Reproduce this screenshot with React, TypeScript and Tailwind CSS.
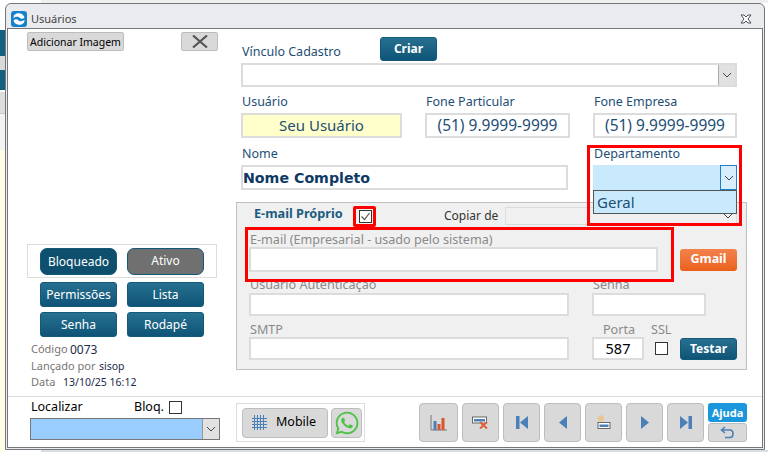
import React from 'react';
import { FaWhatsapp } from 'react-icons/fa';

const Chevron = () => (
    <svg width="10" height="6" viewBox="0 0 10 6" fill="none" stroke="#444" strokeWidth="1">
        <path d="M1 1 L5 5 L9 1" />
    </svg>
);

const Label = ({ className, children }: { className: string; children: React.ReactNode }) => (
    <div className={`text-[12.5px] leading-[16px] text-[#1d4e74] ${className}`}>{children}</div>
);

const MutedLabel = ({ className, children }: { className: string; children: React.ReactNode }) => (
    <div className={`text-[12.6px] leading-[14px] text-[#8a8a8a] ${className}`}>{children}</div>
);

const TealButton = ({ className, children }: { className: string; children: React.ReactNode }) => (
    <button className={`flex items-center justify-center rounded-[3px] border border-[#14587a] bg-gradient-to-b from-[#27708f] to-[#0d5478] text-[12px] text-white ${className}`}>
        {children}
    </button>
);

const NavButton = ({ className, children }: { className: string; children: React.ReactNode }) => (
    <button className={`flex h-[39px] items-center justify-center rounded-[4px] border border-[#bdbdbd] bg-[#d9d9d9] ${className}`}>
        {children}
    </button>
);

const Field = ({ className, children }: { className: string; children?: React.ReactNode }) => (
    <div className={`flex items-center border-2 border-[#dcdcdc] bg-white ${className}`}>{children}</div>
);

const Box = ({ className }: { className: string }) => (
    <div className={`border border-[#333] bg-white ${className}`} />
);

export default function App() {
    return (
        <div className="relative h-[452px] w-[768px] overflow-hidden bg-white font-['Noto_Sans',sans-serif]">
            {/* what shows of the application behind the dialog */}
            <div className="absolute left-[41px] top-0 h-[3px] w-[727px] bg-[#eeeeee]" />
            <div className="absolute left-0 top-[30px] h-[60px] w-[5px] bg-[#12617f]" />
            <div className="absolute left-0 top-[56px] h-[14px] w-[5px] bg-[#d9d9d9]" />
            <div className="absolute left-0 top-[92px] h-[21px] w-[5px] bg-[#dddddd]" />
            <div className="absolute left-0 top-[113px] h-[37px] w-[5px] border-t border-[#cccccc] bg-[#f2f2f2]" />
            <div className="absolute left-0 top-[150px] h-[302px] w-[5px] bg-[#fffde8]" />
            <div className="absolute bottom-0 left-[41px] h-[2px] w-[727px] bg-[#d8dde4]" />

            <div className="absolute left-[5px] top-[3px] flex h-[447px] w-[760px] flex-col rounded-t-[6px] border border-[#73777b] bg-[#e9ebee] px-px pb-px">
                <div className="flex h-[24px] shrink-0 items-center pl-[4px] pr-[11px] pt-[6px]">
                    <svg width="16" height="16" viewBox="0 0 16 16">
                        <rect width="16" height="16" rx="3" fill="#1583c9" />
                        <path d="M13.5 6.5 C12.5 2.5 8.5 1.5 5.5 2.5 C3 3.5 2 5.5 2.8 7.2 C4.5 5.2 7.5 5.4 9 7 C10 8.2 12 8 13.5 6.5 Z" fill="#fff" />
                        <path d="M2.5 9.5 C3.5 13.5 7.5 14.5 10.5 13.5 C13 12.5 14 10.5 13.2 8.8 C11.5 10.8 8.5 10.6 7 9 C6 7.8 4 8 2.5 9.5 Z" fill="#fff" />
                    </svg>
                    <span className="ml-[4px] text-[11px] text-[#444]">Usuários</span>
                    <svg className="ml-auto" width="12" height="10" viewBox="0 0 12 10" fill="#fff" stroke="#4a4f55" strokeWidth="1">
                        <path d="M1 1 H4 L6 3 L8 1 H11 L8 5 L11 9 H8 L6 7 L4 9 H1 L4 5 Z" />
                    </svg>
                </div>

                <div className="flex min-h-0 flex-1 flex-col border border-[#73777b] bg-white">
                    <div className="flex h-[367px] shrink-0">
                        {/* left column */}
                        <div className="flex w-[228px] shrink-0 flex-col pl-[19px]">
                            <div className="mt-[3px] flex justify-between pr-[18px]">
                                <button className="h-[19px] w-[97px] rounded-[2px] border border-[#bdbdbd] bg-[#d9d9d9] text-[10.5px] leading-[16px] text-black">
                                    Adicionar Imagem
                                </button>
                                <button className="flex h-[19px] w-[37px] items-center justify-center rounded-[2px] border border-[#bdbdbd] bg-[#d9d9d9]">
                                    <svg width="16" height="13" viewBox="0 0 16 13" stroke="#555" strokeWidth="2.2" fill="none">
                                        <path d="M1 0.5 L15 12.5 M15 0.5 L1 12.5" />
                                    </svg>
                                </button>
                            </div>

                            <div className="ml-0 mt-[193px] flex h-[34px] w-[190px] items-center gap-[10px] border border-[#dddddd] pl-[12px]">
                                <div className="flex h-[27px] w-[77px] items-center justify-center rounded-[7px] border border-[#14587a] bg-[#0d4f6d] pt-[2px] text-[12px] text-white">Bloqueado</div>
                                <div className="flex h-[27px] w-[77px] items-center justify-center rounded-[7px] border border-[#14587a] bg-[#707070] text-[12px] text-white">Ativo</div>
                            </div>
                            <div className="ml-[13px] mt-[4px] grid w-[164px] grid-cols-2 gap-x-[10px] gap-y-[5px]">
                                <TealButton className="h-[25px] w-[77px]">Permissões</TealButton>
                                <TealButton className="h-[25px] w-[77px]">Lista</TealButton>
                                <TealButton className="h-[25px] w-[77px]">Senha</TealButton>
                                <TealButton className="h-[25px] w-[77px]">Rodapé</TealButton>
                            </div>
                            <div className="ml-[4px] mt-[4px] flex h-[17px] items-center">
                                <span className="w-[39px] text-[11px] text-[#7c7474]">Código</span>
                                <span className="text-[12px] text-[#1b2a4a]">0073</span>
                            </div>
                            <div className="ml-[4px] flex h-[17px] items-center">
                                <span className="w-[68px] text-[11px] text-[#7c7474]">Lançado por</span>
                                <span className="text-[10.5px] text-[#1b2a4a]">sisop</span>
                            </div>
                            <div className="ml-[4px] flex h-[15px] items-center">
                                <span className="w-[32px] text-[11px] text-[#7c7474]">Data</span>
                                <span className="text-[10.5px] text-[#1b2a4a]">13/10/25 16:12</span>
                            </div>
                        </div>

                        {/* right column */}
                        <div className="flex flex-1 flex-col">
                            <div className="ml-[5px] w-[496px]">
                                <div className="mt-[8px] flex h-[26px] items-end pl-[1px]">
                                    <Label className="mb-[3px] w-[138px]">Vínculo Cadastro</Label>
                                    <TealButton className="mb-[2px] h-[24px] w-[57px] font-bold">Criar</TealButton>
                                </div>
                                <Field className="h-[24px] justify-end">
                                    <div className="flex h-full w-[17px] items-center justify-center border-l border-[#aaa] bg-[#e1e1e1]">
                                        <Chevron />
                                    </div>
                                </Field>
                                <div className="mt-[7px] flex pl-[1px]">
                                    <Label className="w-[184px]">Usuário</Label>
                                    <Label className="w-[168px]">Fone Particular</Label>
                                    <Label>Fone Empresa</Label>
                                </div>
                                <div className="mt-[3px] flex">
                                    <Field className="h-[25px] w-[161px] justify-center !bg-[#ffffcc] text-[15px] text-[#1d4e74]">Seu Usuário</Field>
                                    <Field className="ml-[23px] h-[25px] w-[145px] justify-center text-[15.5px] text-[#1d4e74]">(51) 9.9999-9999</Field>
                                    <Field className="ml-[23px] h-[25px] w-[144px] justify-center text-[15.5px] text-[#1d4e74]">(51) 9.9999-9999</Field>
                                </div>
                                <div className="mt-[8px] flex pl-[1px]">
                                    <Label className="w-[352px]">Nome</Label>
                                    <Label>Departamento</Label>
                                </div>
                                <div className="relative mt-[3px] flex">
                                    <Field className="h-[25px] w-[327px] pt-[2px] font-['DejaVu_Sans',sans-serif] text-[14.2px] font-bold text-[#0f3a66]">Nome Completo</Field>
                                    <div className="absolute left-[352px] top-0 z-10 w-[144px]">
                                        <div className="flex h-[25px] justify-end bg-[#c9eafc]">
                                            <div className="flex h-full w-[17px] items-center justify-center border border-[#1e7fd0] bg-[#d8eefc]">
                                                <Chevron />
                                            </div>
                                        </div>
                                        <div className="flex h-[24px] items-center border border-[#555] bg-[#c9eafc] pl-[3px] text-[15px] text-[#1d4e74]">Geral</div>
                                    </div>
                                </div>
                            </div>

                            <div className="relative mt-[12px] h-[168px] w-[511px] border border-[#c0c0c0] bg-[#f0f0f0] pl-[12px]">
                                <div className="mt-[3px] flex h-[19px] items-center">
                                    <span className="mb-[3px] ml-[5px] w-[105px] text-[12.7px] font-bold text-[#1a5d80]">E-mail Próprio</span>
                                    <Box className="mt-[2px] h-[13px] w-[13px]" />
                                    <span className="ml-[72px] w-[61px] text-[12px] text-[#333]">Copiar de</span>
                                    <div className="flex h-[18px] w-[232px] justify-end border border-[#dcdcdc] bg-[#f0f0f0]">
                                        <div className="flex w-[17px] items-center justify-center"><Chevron /></div>
                                    </div>
                                </div>
                                <MutedLabel className="mt-[8px] ml-[1px]">E-mail (Empresarial - usado pelo sistema)</MutedLabel>
                                <div className="flex items-center">
                                    <Field className="h-[25px] w-[409px]" />
                                    <button className="ml-[22px] h-[22px] w-[57px] rounded-[3px] bg-gradient-to-b from-[#f3824a] to-[#ea6019] text-[12.5px] font-bold text-white">Gmail</button>
                                </div>
                                <div className="mt-[6px] flex">
                                    <MutedLabel className="ml-[1px] w-[343px]">Usuário Autenticação</MutedLabel>
                                    <MutedLabel>Senha</MutedLabel>
                                </div>
                                <div className="mt-[1px] flex">
                                    <Field className="h-[23px] w-[320px]" />
                                    <Field className="ml-[23px] h-[23px] w-[114px]" />
                                </div>
                                <div className="mt-[7px] flex">
                                    <MutedLabel className="ml-[1px] w-[353px]">SMTP</MutedLabel>
                                    <MutedLabel className="w-[48px]">Porta</MutedLabel>
                                    <MutedLabel>SSL</MutedLabel>
                                </div>
                                <div className="flex items-center">
                                    <Field className="h-[23px] w-[320px]" />
                                    <Field className="ml-[23px] h-[23px] w-[52px] justify-center text-[14.5px] text-black">587</Field>
                                    <Box className="ml-[11px] h-[13px] w-[13px]" />
                                    <TealButton className="ml-[12px] h-[22px] w-[57px] font-bold">Testar</TealButton>
                                </div>

                                {/* red highlights over the form */}
                                <div className="absolute left-[116px] top-[3px] h-[21px] w-[23px] rounded-[2px] border-[3px] border-[#ff0000]" />
                                <svg className="absolute left-[122px] top-[7px]" width="13" height="13" viewBox="0 0 13 13" fill="none" stroke="#555" strokeWidth="1.2">
                                    <path d="M2.5 6.5 L5.5 9.5 L10.5 3" />
                                </svg>
                                <div className="absolute left-[8px] top-[24px] h-[55px] w-[429px] border-[3px] border-[#ff0000]" />
                                <div className="absolute left-[350px] top-[-58px] z-20 h-[81px] w-[155px] border-[3px] border-[#ff0000]" />
                            </div>
                        </div>
                    </div>

                    {/* footer */}
                    <div className="flex min-h-0 flex-1 border-t border-[#dddddd]">
                        <div className="w-[228px] shrink-0 pl-[22px]">
                            <div className="flex h-[21px] items-center pl-px">
                                <span className="w-[103px] text-[12.5px] text-black">Localizar</span>
                                <span className="w-[35px] text-[12.5px] text-black">Bloq.</span>
                                <Box className="h-[13px] w-[13px]" />
                            </div>
                            <div className="flex h-[22px] w-[190px] justify-end border border-[#777] bg-[#99ccff]">
                                <div className="flex w-[17px] items-center justify-center border-l border-[#999] bg-[#e1e1e1]"><Chevron /></div>
                            </div>
                        </div>
                        <div className="flex flex-1 pt-[6px]">
                            <div className="flex h-[39px] w-[129px] items-center gap-[3px] border border-[#dddddd] pl-[5px]">
                                <button className="flex h-[30px] w-[86px] items-center rounded-[4px] border border-[#bdbdbd] bg-[#d9d9d9] pl-[9px] text-[12.5px] text-black">
                                    <svg width="15" height="15" viewBox="0 0 15 15" stroke="#4a7fb8" strokeWidth="1" fill="none">
                                        <path d="M0 3.5 H15 M0 6.5 H15 M0 9.5 H15 M0 12.5 H15 M2.5 0 V15 M5.5 0 V15 M8.5 0 V15 M11.5 0 V15" />
                                    </svg>
                                    <span className="ml-[9px]">Mobile</span>
                                </button>
                                <button className="flex h-[30px] w-[31px] items-center justify-center rounded-[4px] border border-[#bdbdbd] bg-[#d9d9d9] text-[26px] text-[#4dc247]">
                                    <FaWhatsapp />
                                </button>
                            </div>
                            <div className="ml-[54px] flex gap-[4px]">
                                <NavButton className="w-[39px]">
                                    <svg width="17" height="16" viewBox="0 0 17 16">
                                        <path d="M1 0 V15 H17" fill="none" stroke="#777" />
                                        <rect x="3.5" y="6" width="3" height="9" fill="#4a7fb8" />
                                        <rect x="7.5" y="9" width="3" height="6" fill="#d9552c" />
                                        <rect x="11.5" y="3" width="3" height="12" fill="#d9552c" />
                                    </svg>
                                </NavButton>
                                <NavButton className="w-[37px]">
                                    <svg width="17" height="13" viewBox="0 0 17 13">
                                        <rect x="0.5" y="1" width="14" height="6" fill="#fff" stroke="#666" />
                                        <rect x="2" y="3" width="11" height="2.5" fill="#4a7fb8" />
                                        <path d="M8 6 L15 12.5 M15 6 L8 12.5" stroke="#e0603a" strokeWidth="2" />
                                    </svg>
                                </NavButton>
                                <NavButton className="w-[37px]">
                                    <svg width="12" height="13" viewBox="0 0 12 13" fill="#4a7fb8"><path d="M0 0 H3.5 V13 H0 Z M12 0 V13 L4 6.5 Z" /></svg>
                                </NavButton>
                                <NavButton className="w-[37px]">
                                    <svg width="8" height="13" viewBox="0 0 8 13" fill="#4a7fb8"><path d="M8 0 V13 L0 6.5 Z" /></svg>
                                </NavButton>
                                <NavButton className="w-[37px]">
                                    <svg width="14" height="15" viewBox="0 0 14 15">
                                        <path d="M4 0 V7 M0.5 3.5 H7.5 M1.5 1 L6.5 6 M6.5 1 L1.5 6" stroke="#f0c080" strokeWidth="1.1" />
                                        <rect x="1" y="7.5" width="12" height="6" fill="#fff" stroke="#666" />
                                        <rect x="2.5" y="9.5" width="9" height="2.5" fill="#4a7fb8" />
                                    </svg>
                                </NavButton>
                                <NavButton className="w-[37px]">
                                    <svg width="8" height="13" viewBox="0 0 8 13" fill="#4a7fb8"><path d="M0 0 V13 L8 6.5 Z" /></svg>
                                </NavButton>
                                <NavButton className="w-[37px]">
                                    <svg width="12" height="13" viewBox="0 0 12 13" fill="#4a7fb8"><path d="M0 0 V13 L8 6.5 Z M8.5 0 H12 V13 H8.5 Z" /></svg>
                                </NavButton>
                            </div>
                            <div className="ml-[4px] flex w-[40px] flex-col gap-px">
                                <button className="h-[19px] w-[39px] rounded-[3px] bg-[#1a96dc] text-[11px] font-bold leading-[19px] text-white">Ajuda</button>
                                <button className="flex h-[19px] w-[39px] items-center justify-center rounded-[3px] border border-[#bdbdbd] bg-[#d9d9d9]">
                                    <svg width="15" height="13" viewBox="0 0 15 13" fill="none" stroke="#4a7fb8" strokeWidth="1.6">
                                        <path d="M5 1 L1.5 4 L5 7 M2 4 H10 C14 4 14 11.5 10 11.5 H5" />
                                    </svg>
                                </button>
                            </div>
                        </div>
                    </div>
                </div>
            </div>
        </div>
    );
}
